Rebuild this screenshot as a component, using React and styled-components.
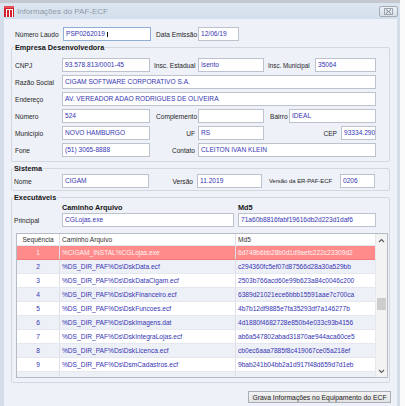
import React from 'react';
import styled, { createGlobalStyle } from 'styled-components';

const Global = createGlobalStyle`
  html, body { margin: 0; padding: 0; background: #fafafa; }
  body { font-family: "Liberation Sans", Arial, sans-serif; font-size: 6.6px; color: #222; }
  * { box-sizing: border-box; }
`;

const Screen = styled.div`
  width: 405px;
  height: 406px;
  overflow: hidden;
  background: #fafafa;
`;

const Window = styled.div`
  width: 400px;
  height: 406px;
  background: #d4deea;
  display: flex;
  flex-direction: column;
`;

const TopStrip = styled.div`
  height: 3px;
  background: #c5c9cf;
`;

const TitleBar = styled.div`
  height: 16px;
  display: flex;
  align-items: center;
  padding: 0 2px 0 4px;
  background: linear-gradient(#dce6f1, #d2deeb);
`;

const TitleText = styled.span`
  flex: 1;
  margin-left: 3px;
  font-size: 8px;
  color: #8f99a7;
`;

const CloseBtn = styled.div`
  width: 19px;
  height: 11px;
  border: 1px solid #a3abb6;
  border-radius: 2px;
  background: linear-gradient(#eef2f6, #d8dfe7);
  display: flex;
  align-items: center;
  justify-content: center;
`;

const Client = styled.div`
  flex: 1;
  margin: 0 3px 0 4px;
  background: #eef1f8;
  padding: 8px 7px 0 7px;
  display: flex;
  flex-direction: column;
`;

const Row = styled.div`
  display: flex;
  align-items: center;
  height: ${p => p.$h || 14}px;
  margin-top: ${p => p.$mt || 0}px;
  padding-left: ${p => p.$indent || 0}px;
  flex: none;
`;

const Label = styled.span`
  flex: none;
  width: ${p => p.$w}px;
  text-align: ${p => p.$align || 'left'};
  padding: 0 ${p => p.$pr || 0}px 0 ${p => p.$pl || 0}px;
  font-size: ${p => (p.$fs ? `${p.$fs}px` : 'inherit')};
  white-space: nowrap;
  color: #262626;
`;

const Field = styled.div`
  flex: none;
  width: ${p => p.$w}px;
  height: 14px;
  border: 1px solid ${p => (p.$focus ? '#8eaed6' : '#bcc3cd')};
  background: #fff;
  color: #3535b3;
  padding-left: 2px;
  line-height: 12px;
  white-space: nowrap;
  overflow: hidden;
  display: flex;
  align-items: center;
`;

const Caret = styled.span`
  flex: none;
  width: 3px;
  height: 5px;
  margin-left: 2px;
  border-left: 1px solid #111;
`;

const Group = styled.fieldset`
  margin: ${p => p.$mt || 0}px 0 0;
  padding: ${p => p.$pt || 0}px ${p => p.$pr || 0}px ${p => p.$pb || 0}px ${p => p.$pl || 0}px;
  border: 1px solid #d3d8e0;
  border-radius: 2px;
  min-width: 0;
  flex: none;
`;

const Legend = styled.legend`
  padding: 0 1px;
  margin-left: -1px;
  font-weight: bold;
  font-size: 7.3px;
  line-height: 9px;
  color: #151515;
`;

const Heading = styled.span`
  flex: none;
  width: ${p => p.$w}px;
  font-weight: bold;
  font-size: 7.3px;
  color: #151515;
`;

const Spacer = styled.span`
  flex: none;
  width: ${p => p.$w}px;
`;

const Grid = styled.div`
  margin: 6px 0 0 2px;
  width: 372px;
  height: 145px;
  border: 1px solid #b5bcc6;
  background: #fff;
  display: flex;
  overflow: hidden;
`;

const Table = styled.div`
  flex: 1;
  display: flex;
  flex-direction: column;
`;

const GridRow = styled.div`
  display: grid;
  grid-template-columns: 43px 176px 1fr;
  height: ${p => (p.$header ? 12 : 14)}px;
  flex: none;
  background: ${p => (p.$selected ? '#ff8b8b' : p.$alt ? '#eef0f7' : '#ffffff')};
  color: ${p => (p.$header ? '#333' : p.$selected ? '#fff3f3' : '#3535b3')};
  border-bottom: 1px solid ${p => (p.$selected ? '#f07a7a' : '#e4e7ed')};
`;

const Cell = styled.div`
  border-right: 1px solid ${p => (p.$last ? 'transparent' : '#dde0e6')};
  padding: 0 ${p => (p.$center ? 0 : 2)}px;
  white-space: nowrap;
  overflow: hidden;
  display: flex;
  align-items: center;
  justify-content: ${p => (p.$center ? 'center' : 'flex-start')};
`;

const ScrollBar = styled.div`
  width: 12px;
  flex: none;
  background: #f3f3f4;
  border-left: 1px solid #e6e8ec;
  display: flex;
  flex-direction: column;
`;

const ScrollArrow = styled.div`
  height: 12px;
  display: flex;
  align-items: center;
  justify-content: center;
  flex: none;
`;

const Track = styled.div`
  flex: 1;
  display: flex;
  flex-direction: column;
  align-items: center;
`;

const Thumb = styled.div`
  width: 9px;
  height: 12px;
  background: #cdcdcd;
  flex: none;
`;

const ButtonRow = styled.div`
  display: flex;
  justify-content: flex-end;
  margin: 8px -1px 0 0;
`;

const Button = styled.div`
  width: 143px;
  height: 12px;
  border: 1px solid #a9afb8;
  background: linear-gradient(#f4f4f4, #e2e2e2);
  display: flex;
  align-items: center;
  justify-content: center;
  color: #222;
  font-size: 6.8px;
  white-space: nowrap;
`;

const rows = [
  ['1', '%CIGAM_INSTAL%CGLojas.exe', '6d748b6bb28b0d1d9aefc222c23309d2'],
  ['2', '%DS_DIR_PAF%Ds\\DskData.ecf', 'c294360fc5ef07d87566d28a30a529bb'],
  ['3', '%DS_DIR_PAF%Ds\\DskDataCigam.ecf', '2503b766acd60e99b623a84c0046c200'],
  ['4', '%DS_DIR_PAF%Ds\\DskFinanceiro.ecf', '6389d21021ece6bbb15591aae7c700ca'],
  ['5', '%DS_DIR_PAF%Ds\\DskFuncoes.ecf', '4b7b12df9885e7fa35293df7a146277b'],
  ['6', '%DS_DIR_PAF%Ds\\DskImagens.dat', '4d1880f4682728e850b4e033c93b4156'],
  ['7', '%DS_DIR_PAF%Ds\\DskIntegraLojas.ecf', 'ab6a547802abad31870ae944aca60ce5'],
  ['8', '%DS_DIR_PAF%Ds\\DskLicenca.ecf', 'cb0ec6aaa7885f8c419067ce05a218ef'],
  ['9', '%DS_DIR_PAF%Ds\\DsmCadastros.ecf', '9bab241b04bb2a1d917f48d659d7d1eb'],
  ['', '', ''],
];

const Logo = () => (
  <svg width="10" height="11" viewBox="0 0 10 11">
    <rect x="0" y="0" width="10" height="11" fill="#d3222c" />
    <rect x="0" y="0" width="10" height="2" fill="#e85058" />
    <rect x="2" y="3" width="1" height="8" fill="#fff" />
    <rect x="5" y="3" width="1" height="8" fill="#fff" />
    <rect x="8" y="3" width="1" height="8" fill="#fff" />
    <rect x="2" y="3" width="7" height="1" fill="#fff" />
  </svg>
);

const CloseGlyph = () => (
  <svg width="9" height="7" viewBox="0 0 9 7">
    <rect x="0.5" y="0.5" width="8" height="6" fill="none" stroke="#9aa3ae" strokeWidth="1" />
    <path d="M2 1.5 L7 5.5 M7 1.5 L2 5.5" stroke="#7f8893" strokeWidth="1" />
  </svg>
);

const Chevron = ({ up }) => (
  <svg width="7" height="5" viewBox="0 0 7 5">
    <path d={up ? 'M1 4 L3.5 1.5 L6 4' : 'M1 1 L3.5 3.5 L6 1'} fill="none" stroke="#606060" strokeWidth="1.2" />
  </svg>
);

export default function App() {
  return (
    <Screen>
      <Global />
      <Window>
        <TopStrip />
        <TitleBar>
          <Logo />
          <TitleText>Informações do PAF-ECF</TitleText>
          <CloseBtn>
            <CloseGlyph />
          </CloseBtn>
        </TitleBar>
        <Client>
          <Row $indent={4}>
            <Label $w={48}>Número Laudo</Label>
            <Field $w={88} $focus>
              PSP0262019
              <Caret />
            </Field>
            <Label $w={47} $pl={5}>Data Emissão</Label>
            <Field $w={41}>12/06/19</Field>
          </Row>

          <Group $mt={2} $pt={6} $pb={4} $pl={3}>
            <Legend>Empresa Desenvolvedora</Legend>
            <Row>
              <Label $w={47}>CNPJ</Label>
              <Field $w={88}>93.578.813/0001-45</Field>
              <Label $w={48} $pl={4}>Insc. Estadual</Label>
              <Field $w={66}>Isento</Field>
              <Label $w={51} $pl={4} $fs={6.3}>Insc. Municipal</Label>
              <Field $w={61}>35064</Field>
            </Row>
            <Row $mt={3}>
              <Label $w={47}>Razão Social</Label>
              <Field $w={314}>CIGAM SOFTWARE CORPORATIVO S.A.</Field>
            </Row>
            <Row $mt={3}>
              <Label $w={47}>Endereço</Label>
              <Field $w={314}>AV. VEREADOR ADAO RODRIGUES DE OLIVEIRA</Field>
            </Row>
            <Row $mt={3}>
              <Label $w={47}>Número</Label>
              <Field $w={88}>524</Field>
              <Label $w={48} $pl={6}>Complemento</Label>
              <Field $w={66} />
              <Label $w={25} $pl={6}>Bairro</Label>
              <Field $w={87}>IDEAL</Field>
            </Row>
            <Row $mt={3}>
              <Label $w={47}>Município</Label>
              <Field $w={88}>NOVO HAMBURGO</Field>
              <Label $w={48} $align="right" $pr={3}>UF</Label>
              <Field $w={66}>RS</Field>
              <Label $w={77} $align="right" $pr={4}>CEP</Label>
              <Field $w={35}>93334.290</Field>
            </Row>
            <Row $mt={3}>
              <Label $w={47}>Fone</Label>
              <Field $w={88}>(51) 3065-8888</Field>
              <Label $w={48} $align="right" $pr={3}>Contato</Label>
              <Field $w={178}>CLEITON IVAN KLEIN</Field>
            </Row>
          </Group>

          <Group $mt={2} $pt={1} $pb={2} $pl={2}>
            <Legend>Sistema</Legend>
            <Row>
              <Label $w={48}>Nome</Label>
              <Field $w={87}>CIGAM</Field>
              <Label $w={48} $align="right" $pr={4}>Versão</Label>
              <Field $w={65}>11.2019</Field>
              <Label $w={78} $pl={7} $fs={5.9}>Versão da ER-PAF-ECF</Label>
              <Field $w={35}>0206</Field>
            </Row>
          </Group>

          <Group $mt={2} $pt={0} $pb={4} $pl={2}>
            <Legend>Executáveis</Legend>
            <Row $h={9} $mt={1}>
              <Spacer $w={48} />
              <Heading $w={176}>Caminho Arquivo</Heading>
              <Heading $w={60}>Md5</Heading>
            </Row>
            <Row $mt={1}>
              <Label $w={48}>Principal</Label>
              <Field $w={172}>CGLojas.exe</Field>
              <Spacer $w={4} />
              <Field $w={138}>71a60b8816fabf19616db2d223d1daf6</Field>
            </Row>
            <Grid>
              <Table>
                <GridRow $header>
                  <Cell $center>Sequência</Cell>
                  <Cell>Caminho Arquivo</Cell>
                  <Cell $last>Md5</Cell>
                </GridRow>
                {rows.map((r, i) => (
                  <GridRow key={i} $selected={i === 0} $alt={i % 2 === 1}>
                    <Cell $center>{r[0]}</Cell>
                    <Cell>{r[1]}</Cell>
                    <Cell $last>{r[2]}</Cell>
                  </GridRow>
                ))}
              </Table>
              <ScrollBar>
                <ScrollArrow>
                  <Chevron up />
                </ScrollArrow>
                <Track>
                  <Thumb style={{ marginTop: 52 }} />
                </Track>
                <ScrollArrow>
                  <Chevron />
                </ScrollArrow>
              </ScrollBar>
            </Grid>
          </Group>

          <ButtonRow>
            <Button>Grava Informações no Equipamento do ECF</Button>
          </ButtonRow>
        </Client>
      </Window>
    </Screen>
  );
}
